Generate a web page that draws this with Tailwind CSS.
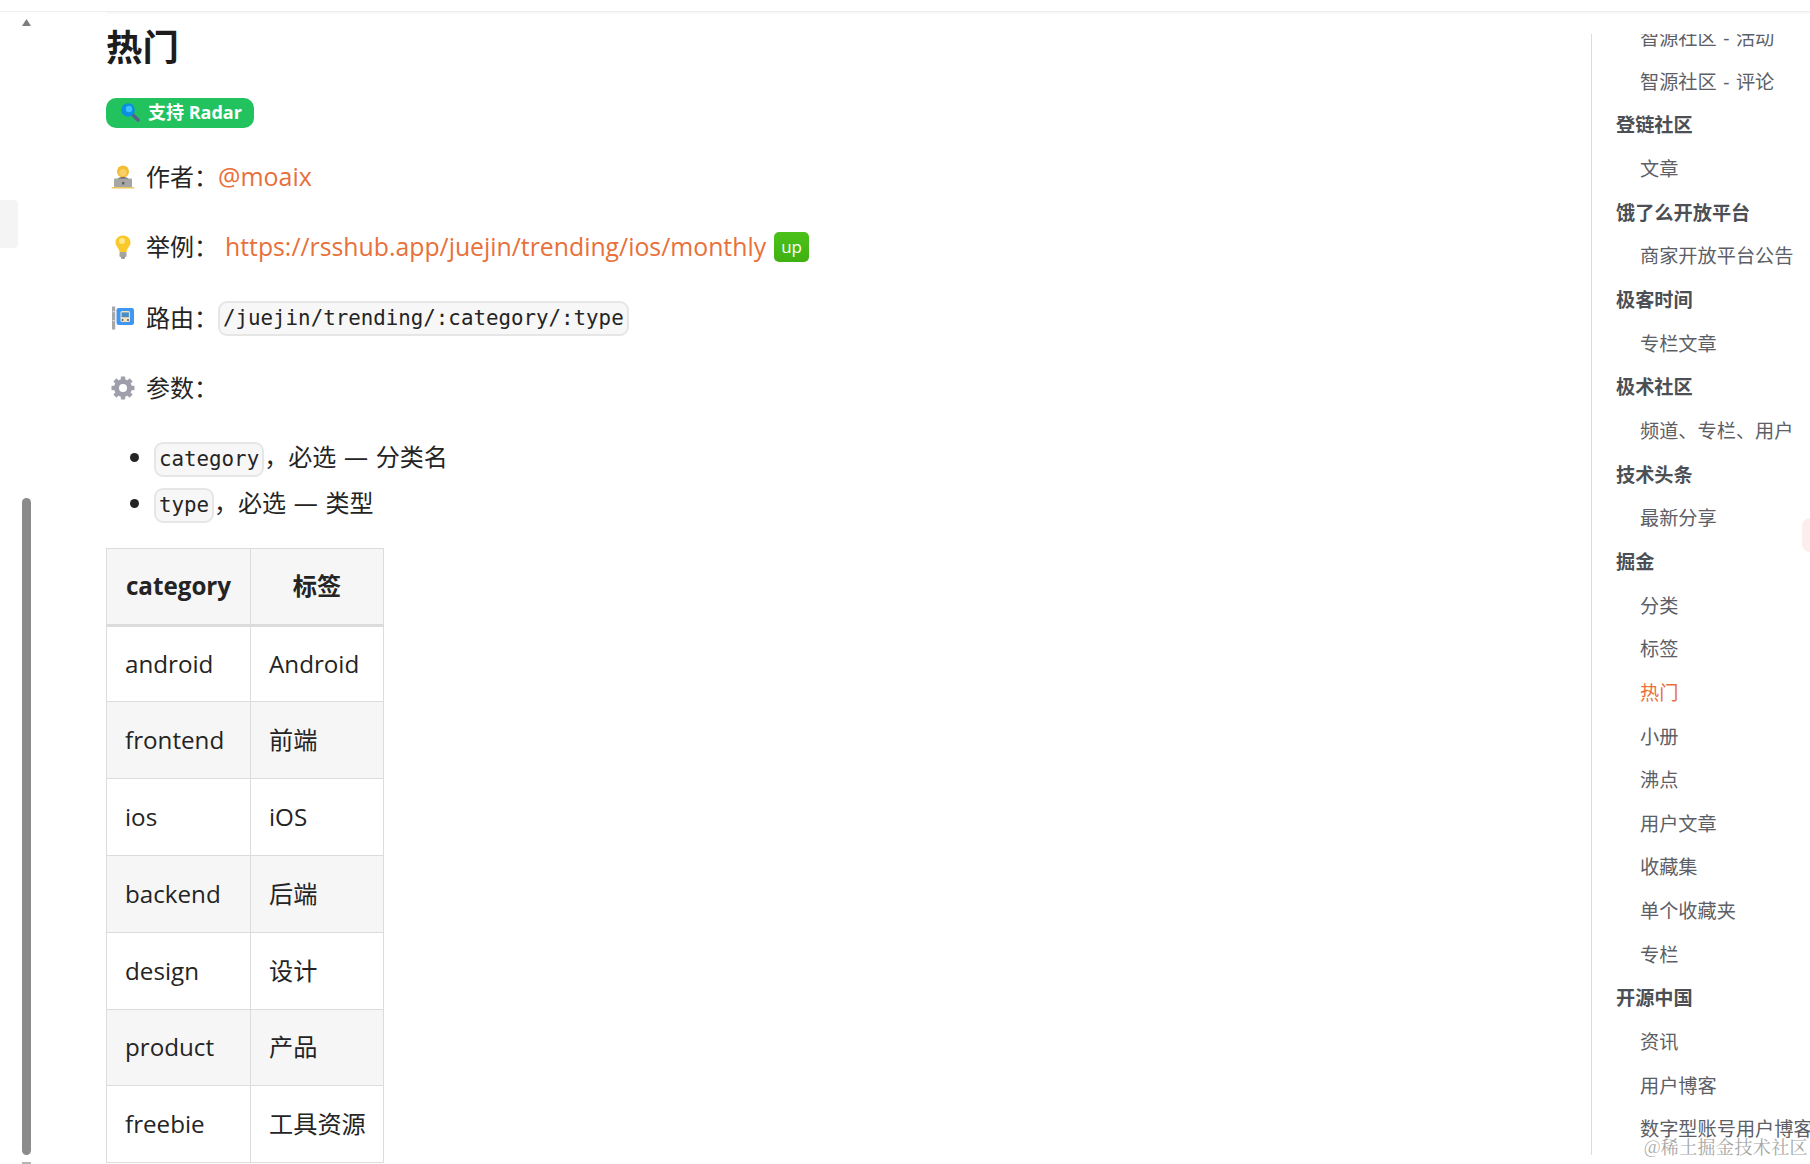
<!DOCTYPE html>
<html lang="zh-CN">
<head>
<meta charset="utf-8">
<title>热门</title>
<script src="https://cdn.jsdelivr.net/npm/@tailwindcss/browser@4"></script>
</head>
<body class="bg-white">
<div class="relative w-[1810px] h-[1164px] overflow-hidden flex flex-col bg-white text-[#242424] font-['Open_Sans','Noto_Sans_CJK_SC',sans-serif]">
  <header class="h-[12px] shrink-0 bg-white border-b border-[#eeeeee] shadow-[0_1px_2px_#0000000d]"></header>

  <div class="flex flex-1 min-h-0">
    <aside class="relative w-[106px] shrink-0 bg-white">
      <div class="absolute left-0 top-[188px] w-[18px] h-[48px] bg-[#f4f4f4] rounded-r-[4px]"></div>
      <svg class="absolute left-[22px] top-[7px]" width="9" height="7" viewBox="0 0 9 7"><path d="M4.5 0 L9 7 H0 Z" fill="#7d7d7d"/></svg>
      <div class="absolute left-[22px] top-[486px] w-[9px] h-[657px] rounded-[5px] bg-[#8b8b8b]"></div>
      <div class="absolute left-[22px] top-[1150px] w-[9px] h-[2px] bg-[#b5b5b5]"></div>
    </aside>

    <main class="flex-1 min-w-0 pt-[7px]">
      <h1 class="h-[56px] leading-[56px] text-[36.4px] font-bold text-[#1c1c1c] mb-[23px]">热门</h1>

      <div class="inline-flex items-center h-[30px] w-[148px] pl-[14px] pb-[2px] rounded-[10px] bg-[#22c35e] text-white text-[18px] font-bold mb-[30px] align-top">
        <svg class="mr-[8px] shrink-0" width="20" height="20" viewBox="0 0 20 20"><path d="M12 12 L18 18" stroke="#5b5f8f" stroke-width="3.4" stroke-linecap="round"/><circle cx="8" cy="8" r="6.8" fill="#0b8fe0"/><circle cx="9" cy="7" r="3.2" fill="#3cc0ff"/></svg>
        <span>支持 Radar</span>
      </div>

      <p class="flex items-center h-[38.4px] text-[24px] mb-[32px]">
        <svg class="ml-[5px] mr-[11px] shrink-0" width="24" height="24" viewBox="0 0 24 24"><circle cx="12" cy="6.5" r="6" fill="#f3bd2f"/><circle cx="12" cy="7.5" r="3.6" fill="#f8cf6a"/><path d="M4 22 C4 15 7 12 12 12 C17 12 20 15 20 22 Z" fill="#616161"/><rect x="3" y="13.5" width="18" height="9" rx="1" fill="#a6a6a6"/><rect x="11" y="17" width="2.4" height="2.4" fill="#5f5f5f"/><rect x="0.5" y="22" width="23" height="1.6" rx="0.8" fill="#ecc65a"/></svg>
        <span>作者：</span><a class="text-[25px] text-[#e8703a]">@moaix</a>
      </p>

      <p class="flex items-center h-[38.4px] text-[24px] mb-[32px] relative -top-[0.5px]">
        <svg class="ml-[5px] mr-[11px] shrink-0" width="24" height="24" viewBox="0 0 24 24"><path d="M12 0.5 C6.5 0.5 4.5 4.5 4.5 7.5 C4.5 11 8 13 8.5 17 H15.5 C16 13 19.5 11 19.5 7.5 C19.5 4.5 17.5 0.5 12 0.5 Z" fill="#f9c92b"/><circle cx="11" cy="6" r="3" fill="#fde98a"/><rect x="8.5" y="17" width="7" height="5" rx="1" fill="#a3a3a3"/><rect x="10" y="22" width="4" height="1.8" rx="0.9" fill="#8a8a8a"/></svg>
        <span>举例：</span><a class="ml-[7px] text-[24.8px] text-[#e8703a] whitespace-nowrap">https://rsshub.app/juejin/trending/ios/monthly</a>
        <span class="ml-[8px] inline-flex items-center justify-center w-[35px] h-[30px] rounded-[5px] bg-linear-to-b from-[#4cc01a] to-[#3fb212] text-white text-[17px]">up</span>
      </p>

      <p class="flex items-center h-[38.4px] text-[24px] mb-[32px]">
        <svg class="ml-[5px] mr-[11px] shrink-0" width="24" height="24" viewBox="0 0 24 24"><rect x="1" y="0.5" width="3.2" height="23" fill="#a8a8a8"/><rect x="1.6" y="5" width="2" height="1.2" fill="#e4e4e4"/><rect x="1.6" y="14" width="2" height="1.2" fill="#e4e4e4"/><rect x="5.5" y="2" width="17.5" height="17" rx="2.2" fill="#3f97f3"/><rect x="9.5" y="5" width="9.5" height="11" rx="1.5" fill="#f0e3bd"/><rect x="10.6" y="6.4" width="7.3" height="4.8" fill="#4a8cc4"/><circle cx="11.5" cy="14" r="0.9" fill="#555"/><circle cx="17" cy="14" r="0.9" fill="#555"/></svg>
        <span>路由：</span><code class="inline-flex items-center h-[35px] mt-[1px] px-[3px] border-2 border-[#e6e6e6] rounded-[9px] bg-[#f7f7f7] font-['DejaVu_Sans_Mono',monospace] text-[20.8px] whitespace-nowrap">/juejin/trending/:category/:type</code>
      </p>

      <p class="flex items-center h-[38.4px] text-[24px] mb-[26px]">
        <svg class="ml-[5px] mr-[11px] shrink-0" width="24" height="24" viewBox="0 0 24 24"><circle cx="12" cy="12" r="6.5" fill="none" stroke="#9f9fab" stroke-width="5"/><g stroke="#9f9fab" stroke-width="4.4" stroke-linecap="butt"><path d="M12 0.5 V4"/><path d="M12 20 V23.5"/><path d="M0.5 12 H4"/><path d="M20 12 H23.5"/><path d="M3.9 3.9 L6.4 6.4"/><path d="M17.6 17.6 L20.1 20.1"/><path d="M3.9 20.1 L6.4 17.6"/><path d="M17.6 6.4 L20.1 3.9"/></g></svg>
        <span>参数：</span>
      </p>

      <ul class="list-disc pl-[48px] text-[24px] mb-[22px] [word-spacing:1.5px]">
        <li class="h-[46px] leading-[46px]"><code class="inline-block h-[35px] leading-[31px] px-[3px] border-2 border-[#e6e6e6] rounded-[9px] bg-[#f7f7f7] font-['DejaVu_Sans_Mono',monospace] text-[20.8px] align-middle">category</code>，必选 — 分类名</li>
        <li class="h-[46px] leading-[46px]"><code class="inline-block h-[35px] leading-[31px] px-[3px] border-2 border-[#e6e6e6] rounded-[9px] bg-[#f7f7f7] font-['DejaVu_Sans_Mono',monospace] text-[20.8px] align-middle">type</code>，必选 — 类型</li>
      </ul>

      <table class="table-fixed w-[277px] border-collapse text-[24.2px] text-[#242424]">
        <colgroup><col class="w-[144px]"><col class="w-[133px]"></colgroup>
        <thead>
          <tr class="h-[77px] bg-[#f6f6f6]">
            <th class="border border-b-[3px] border-[#dcdcdc] font-bold">category</th>
            <th class="border border-b-[3px] border-[#dcdcdc] font-bold">标签</th>
          </tr>
        </thead>
        <tbody>
          <tr class="h-[76.8px]"><td class="border border-[#dcdcdc] pl-[18px]">android</td><td class="border border-[#dcdcdc] pl-[18px]">Android</td></tr>
          <tr class="h-[76.8px] bg-[#f6f6f6]"><td class="border border-[#dcdcdc] pl-[18px]">frontend</td><td class="border border-[#dcdcdc] pl-[18px]">前端</td></tr>
          <tr class="h-[76.8px]"><td class="border border-[#dcdcdc] pl-[18px]">ios</td><td class="border border-[#dcdcdc] pl-[18px]">iOS</td></tr>
          <tr class="h-[76.8px] bg-[#f6f6f6]"><td class="border border-[#dcdcdc] pl-[18px]">backend</td><td class="border border-[#dcdcdc] pl-[18px]">后端</td></tr>
          <tr class="h-[76.8px]"><td class="border border-[#dcdcdc] pl-[18px]">design</td><td class="border border-[#dcdcdc] pl-[18px]">设计</td></tr>
          <tr class="h-[76.8px] bg-[#f6f6f6]"><td class="border border-[#dcdcdc] pl-[18px]">product</td><td class="border border-[#dcdcdc] pl-[18px]">产品</td></tr>
          <tr class="h-[76.8px]"><td class="border border-[#dcdcdc] pl-[18px]">freebie</td><td class="border border-[#dcdcdc] pl-[18px]">工具资源</td></tr>
        </tbody>
      </table>
    </main>

    <nav class="w-[219px] shrink-0 mt-[22px] h-[1121px] overflow-hidden border-l border-[#dcdcdc] text-[19.2px] leading-[43.67px] whitespace-nowrap text-[#5c6066] [word-spacing:1.5px]">
      <div class="-mt-[18px]">
        <div class="h-[43.67px] pl-[48px]">智源社区 - 活动</div>
        <div class="h-[43.67px] pl-[48px]">智源社区 - 评论</div>
        <div class="h-[43.67px] pl-[24px] font-bold text-[#4c5055]">登链社区</div>
        <div class="h-[43.67px] pl-[48px]">文章</div>
        <div class="h-[43.67px] pl-[24px] font-bold text-[#4c5055]">饿了么开放平台</div>
        <div class="h-[43.67px] pl-[48px]">商家开放平台公告</div>
        <div class="h-[43.67px] pl-[24px] font-bold text-[#4c5055]">极客时间</div>
        <div class="h-[43.67px] pl-[48px]">专栏文章</div>
        <div class="h-[43.67px] pl-[24px] font-bold text-[#4c5055]">极术社区</div>
        <div class="h-[43.67px] pl-[48px]">频道、专栏、用户</div>
        <div class="h-[43.67px] pl-[24px] font-bold text-[#4c5055]">技术头条</div>
        <div class="h-[43.67px] pl-[48px]">最新分享</div>
        <div class="h-[43.67px] pl-[24px] font-bold text-[#4c5055]">掘金</div>
        <div class="h-[43.67px] pl-[48px]">分类</div>
        <div class="h-[43.67px] pl-[48px]">标签</div>
        <div class="h-[43.67px] pl-[48px] text-[#e8703a]">热门</div>
        <div class="h-[43.67px] pl-[48px]">小册</div>
        <div class="h-[43.67px] pl-[48px]">沸点</div>
        <div class="h-[43.67px] pl-[48px]">用户文章</div>
        <div class="h-[43.67px] pl-[48px]">收藏集</div>
        <div class="h-[43.67px] pl-[48px]">单个收藏夹</div>
        <div class="h-[43.67px] pl-[48px]">专栏</div>
        <div class="h-[43.67px] pl-[24px] font-bold text-[#4c5055]">开源中国</div>
        <div class="h-[43.67px] pl-[48px]">资讯</div>
        <div class="h-[43.67px] pl-[48px]">用户博客</div>
        <div class="h-[43.67px] pl-[48px]">数字型账号用户博客</div>
      </div>
    </nav>
  </div>

  <div class="absolute left-[1802px] top-[518px] w-[16px] h-[34px] rounded-full bg-[#fdeeee]"></div>
  <div class="absolute left-[1644px] top-[1134px] text-[18px] leading-[24px] tracking-[0.4px] whitespace-nowrap text-[#a6a6a6] font-['Noto_Serif_CJK_SC','Liberation_Serif','Noto_Sans_CJK_SC',serif]">@稀土掘金技术社区</div>
</div>
</body>
</html>
